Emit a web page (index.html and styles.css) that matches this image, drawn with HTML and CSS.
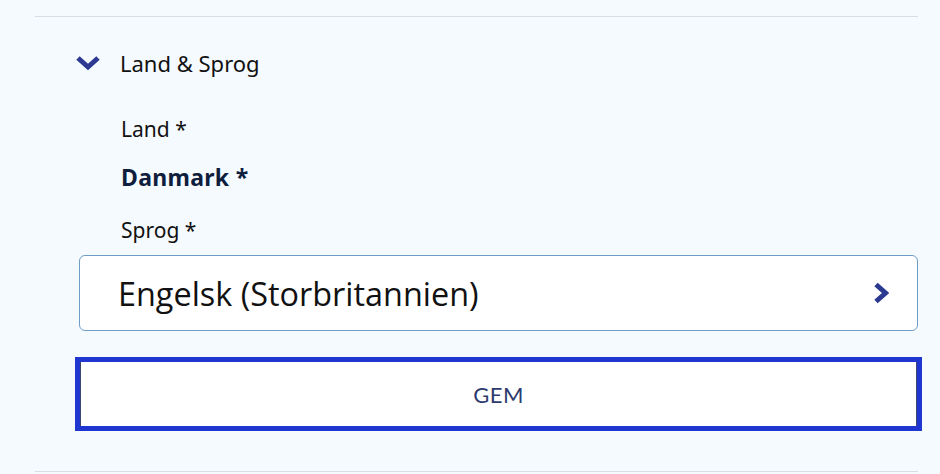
FILE: index.html
```html
<!DOCTYPE html>
<html lang="da">
<head>
<meta charset="utf-8">
<link rel="stylesheet" href="styles.css">
</head>
<body>
<div class="panel">
  <div class="section-head">
    <svg class="chev-down" width="24" height="16" viewBox="0 0 24 16"><path d="M2 3 L12 12 L22 3" fill="none" stroke="#2b3990" stroke-width="5" stroke-linejoin="miter"/></svg>
    <span class="section-title">Land &amp; Sprog</span>
  </div>
  <div class="form">
    <div class="label label-land">Land *</div>
    <div class="value">Danmark *</div>
    <div class="label label-sprog">Sprog *</div>
    <div class="select">
      <span class="select-text">Engelsk (Storbritannien)</span>
      <svg class="chev-right" width="16" height="24" viewBox="0 0 16 24"><path d="M3 3.5 L12.5 12 L3 20.5" fill="none" stroke="#2b3990" stroke-width="5"/></svg>
    </div>
    <button class="save">GEM</button>
  </div>
</div>
</body>
</html>
```
FILE: styles.css
```css
html, body {
  margin: 0;
  padding: 0;
  background: #f5faff;
}
body {
  width: 940px;
  height: 474px;
  overflow: hidden;
  font-family: "Noto Sans", Lato, sans-serif;
  color: #111;
}
.panel {
  margin: 16px 22px 0 35px;
  border-top: 1px solid #d6dde4;
  border-bottom: 1px solid #d6dde4;
  height: 456px;
  box-sizing: border-box;
}
.section-head {
  display: flex;
  align-items: center;
  margin-top: 31px;
  padding-left: 41px;
  height: 30px;
}
.chev-down {
  display: block;
}
.section-title {
  margin-left: 20px;
  font-size: 22px;
  color: #111;
}
.form {
  padding-left: 44px;
}
.label {
  font-size: 21px;
  line-height: 26px;
  padding-left: 42px;
  color: #111;
}
.label-land {
  margin-top: 38px;
}
.value {
  font-size: 23px;
  font-weight: 700;
  line-height: 26px;
  padding-left: 42px;
  margin-top: 22px;
  letter-spacing: 0.3px;
  color: #0f1e3d;
}
.label-sprog {
  margin-top: 27px;
}
.select {
  margin-top: 12px;
  width: 839px;
  height: 76px;
  box-sizing: border-box;
  border: 1px solid #6f9cc7;
  border-radius: 6px;
  background: #fff;
  display: flex;
  align-items: center;
  justify-content: space-between;
  padding: 0 28px 0 38px;
}
.select-text {
  font-family: "Open Sans", sans-serif;
  font-size: 32.4px;
  color: #111;
}
.chev-right {
  display: block;
}
.save {
  display: block;
  margin-top: 31px;
  margin-left: 1px;
  width: 837px;
  height: 64px;
  background: #fff;
  border: none;
  border-left: 1px solid #3c4670;
  border-right: 1px solid #3c4670;
  outline: 5px solid #1f36d1;
  font-family: Lato, sans-serif;
  font-size: 22px;
  letter-spacing: 0.5px;
  color: #2e3a6e;
  cursor: pointer;
}
```
